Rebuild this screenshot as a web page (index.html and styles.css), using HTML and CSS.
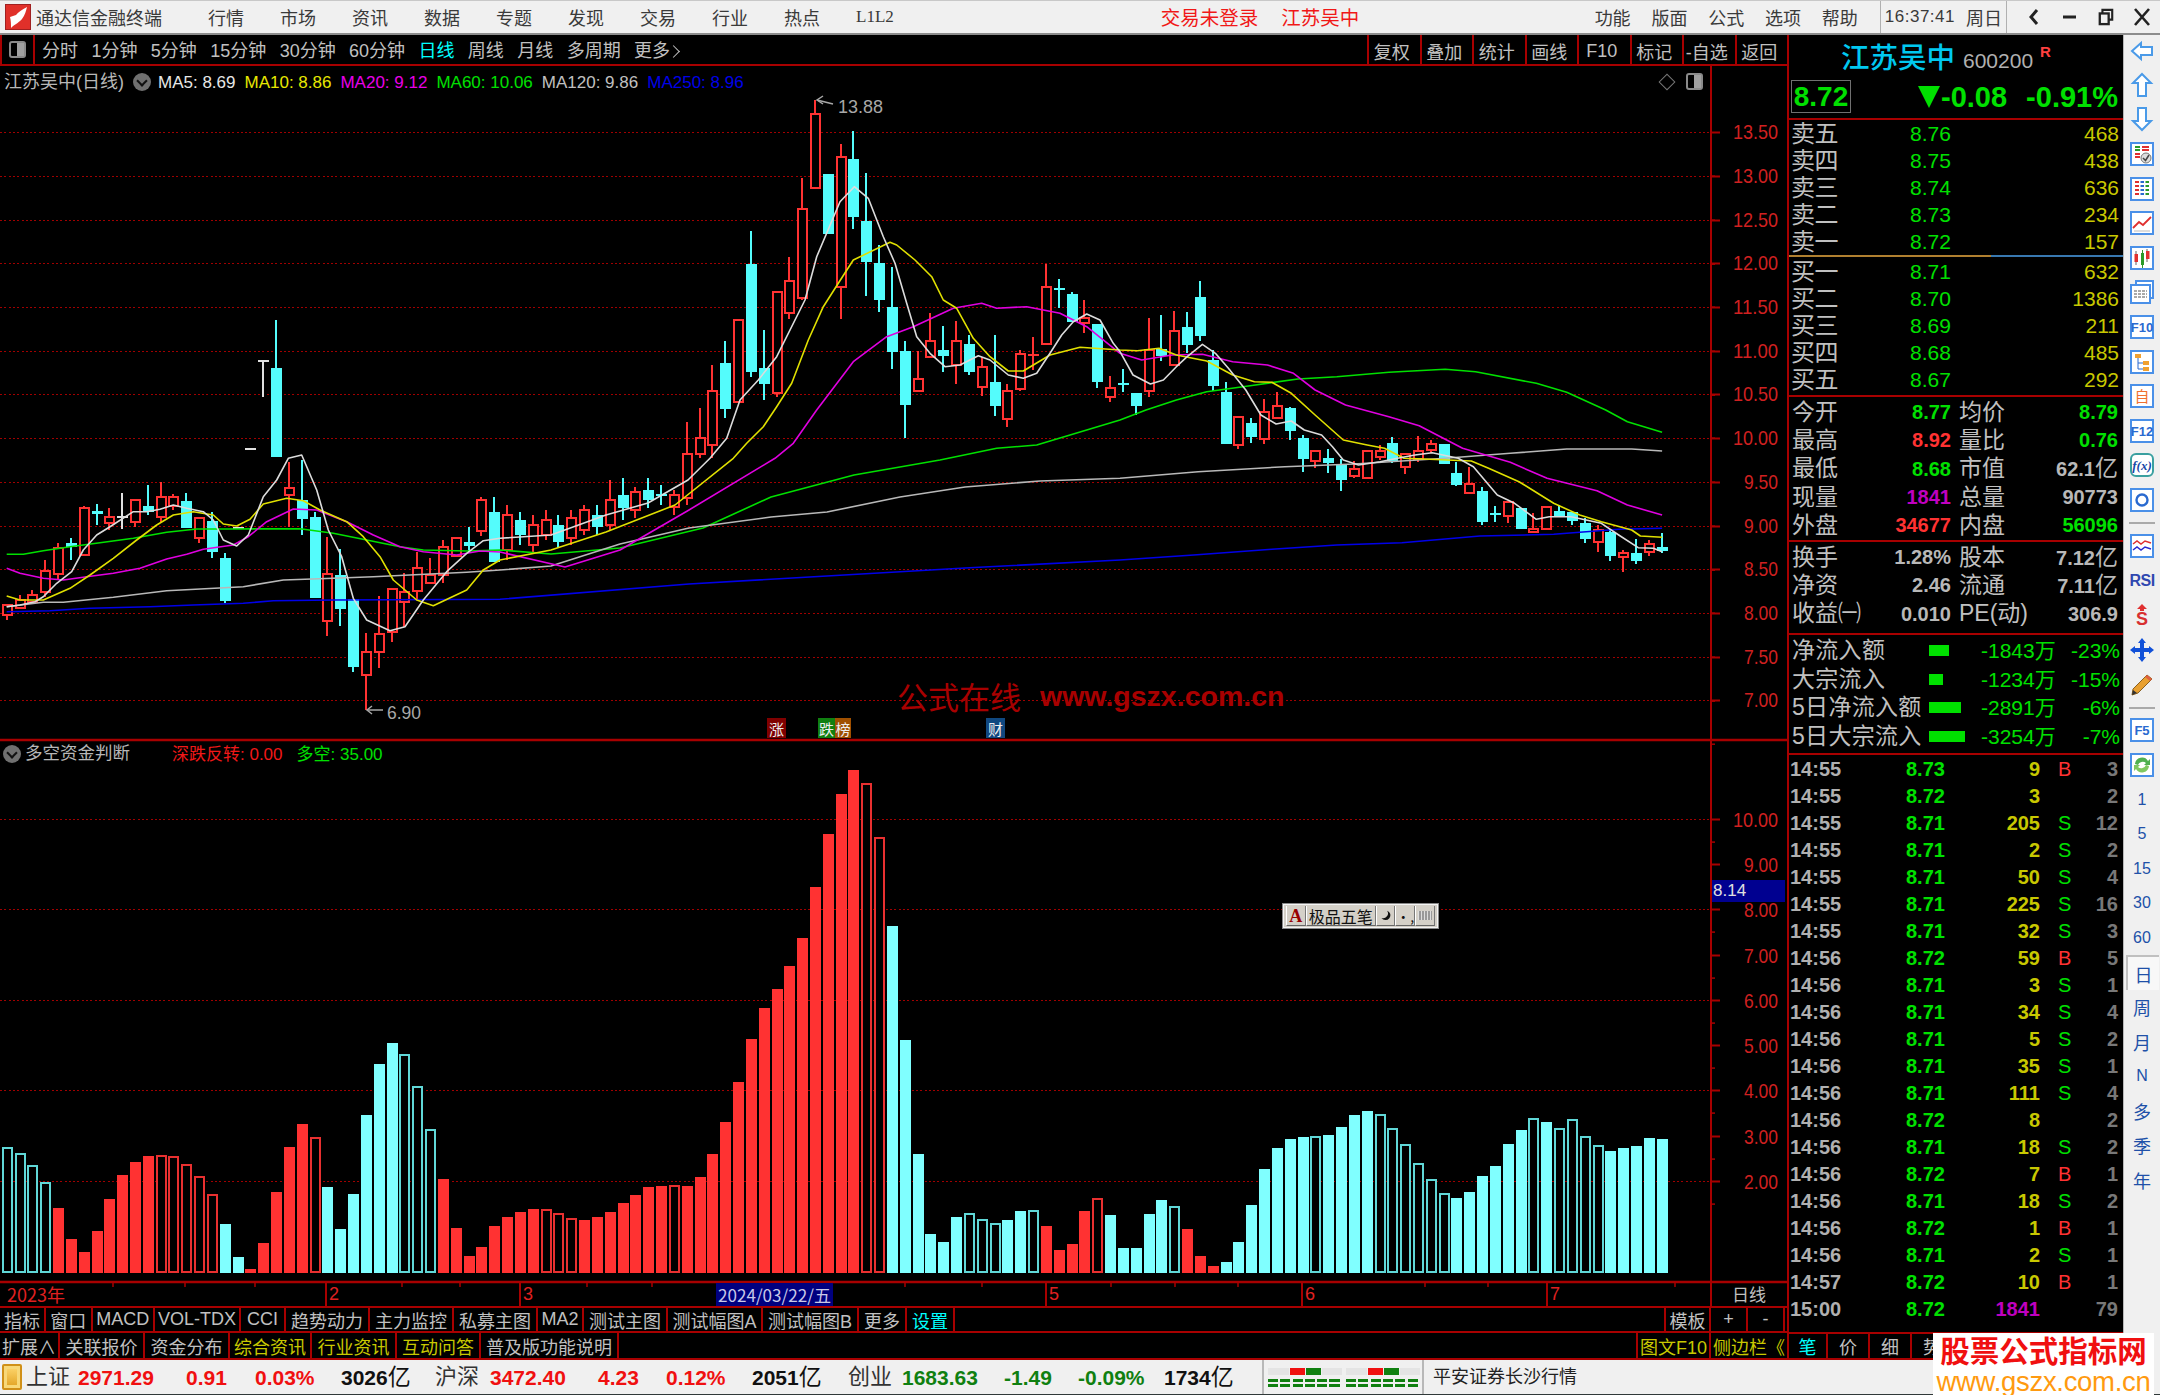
FILE: index.html
```html
<!DOCTYPE html>
<html lang="zh">
<head>
<meta charset="utf-8">
<title>通达信金融终端</title>
<link rel="stylesheet" href="styles.css">
</head>
<body>
<div class="app">
<header class="titlebar">
  <svg class="logo" viewBox="0 0 26 26"><rect width="26" height="26" fill="#e0302a"/><rect x=".5" y=".5" width="25" height="25" fill="none" stroke="#a02020"/><path d="M22 3C17 6 13 8 11 11L5 13C6 17 6 20 6 24C10 20 15 18 17 15C20 11 21 7 22 3Z" fill="#fff"/></svg>
  <span class="appname">通达信金融终端</span>
  <nav class="menu">
    <span>行情</span><span>市场</span><span>资讯</span><span>数据</span><span>专题</span><span>发现</span><span>交易</span><span>行业</span><span>热点</span><span class="l1l2">L1L2</span>
  </nav>
  <span class="notice notice-a">交易未登录</span>
  <span class="notice notice-b">江苏吴中</span>
  <nav class="menu menu-right">
    <span>功能</span><span>版面</span><span>公式</span><span>选项</span><span>帮助</span>
  </nav>
  <div class="clock"><span class="time">16:37:41</span><span>周日</span></div>
  <div class="winctl">
    <svg viewBox="0 0 16 20"><path d="M11 3L5 10L11 17" fill="none" stroke="#222" stroke-width="3"/></svg>
    <svg viewBox="0 0 16 20"><rect x="1" y="8.5" width="13" height="3" fill="#222"/></svg>
    <svg viewBox="0 0 18 20"><path d="M5 6V2H16V13H12" fill="none" stroke="#222" stroke-width="2.4"/><rect x="2" y="6" width="10" height="12" fill="none" stroke="#222" stroke-width="2.6"/></svg>
    <svg viewBox="0 0 16 20"><path d="M1 2L15 18M15 2L1 18" stroke="#222" stroke-width="2.6"/></svg>
  </div>
</header>

<div class="workspace">
  <main class="left">
    <div class="toolbar">
      <div class="tb-icon"><span class="panel-ico"><i></i></span></div>
      <div class="periods">
        <span>分时</span><span>1分钟</span><span>5分钟</span><span>15分钟</span><span>30分钟</span><span>60分钟</span><span class="c">日线</span><span>周线</span><span>月线</span><span>多周期</span><span>更多<i class="more-chev"></i></span>
      </div>
      <div class="tb-right">
        <span>复权</span><span>叠加</span><span>统计</span><span>画线</span><span>F10</span><span>标记</span><span>-自选</span><span>返回</span>
      </div>
    </div>
    <div class="chart">
      <svg id="chart" class="chart-svg" viewBox="0 66 1787 1240"></svg>
      <div class="legend legend-top">
        <span class="legend-name">江苏吴中(日线)</span><span class="chev"></span>
        <span class="lg-w">MA5: 8.69</span><span class="lg-y">MA10: 8.86</span><span class="lg-m">MA20: 9.12</span><span class="lg-g">MA60: 10.06</span><span class="lg-g2">MA120: 9.86</span><span class="lg-b">MA250: 8.96</span>
      </div>
      <div class="pane-ico"><span class="diamond"></span><span class="panel-ico small"><i></i></span></div>
      <div class="legend legend-low">
        <span class="chev chev-low"></span><span class="legend-name">多空资金判断</span>
        <span class="lg-r">深跌反转: 0.00</span><span class="lg-g">多空: 35.00</span>
      </div>
      <div class="gszx"><span class="gszx-cn">公式在线</span><span class="gszx-en">www.gszx.com.cn</span></div>
      <span class="tag tag-zhang">涨</span>
      <span class="tag tag-die">跌</span><span class="tag tag-bang">榜</span>
      <span class="tag tag-cai">财</span>
      <div class="ime">
        <span class="ime-a">A</span><span class="ime-name">极品五笔</span>
        <span class="ime-btn"><svg viewBox="0 0 16 16"><path d="M10 2A6 6 0 1 1 3 11A6 6 0 0 0 10 2Z" fill="#111"/></svg></span>
        <span class="ime-btn ime-punct">·,</span>
        <span class="ime-btn ime-kb"></span>
      </div>
      <span class="price-tag">8.14</span>
    </div>
    <div class="tabs tabs-a">
      <span>指标</span><span>窗口</span><span>MACD</span><span>VOL-TDX</span><span>CCI</span><span>趋势动力</span><span>主力监控</span><span>私募主图</span><span>MA2</span><span>测试主图</span><span>测试幅图A</span><span>测试幅图B</span><span>更多</span><span class="c">设置</span><span class="blank"></span><span>模板</span><span>+</span><span>-</span><span class="blank none"></span>
    </div>
    <div class="tabs tabs-b">
      <span>扩展∧</span><span>关联报价</span><span>资金分布</span><span class="y">综合资讯</span><span class="y">行业资讯</span><span class="y">互动问答</span><span>普及版功能说明</span><span class="blank"></span><span class="y">图文F10</span><span class="y none">侧边栏《</span>
    </div>
  </main>

  <aside class="panel">
    <div class="head">
      <div class="name-row"><span class="stock">江苏吴中</span><span class="code">600200</span><span class="rflag">R</span></div>
      <div class="quote-row"><span class="last">8.72</span><span class="chg"><i class="tri"></i>-0.08</span><span class="chg">-0.91%</span></div>
    </div>
    <div class="book">
      <div class="ob"><span>卖五</span><b>8.76</b><em>468</em></div>
      <div class="ob"><span>卖四</span><b>8.75</b><em>438</em></div>
      <div class="ob"><span>卖三</span><b>8.74</b><em>636</em></div>
      <div class="ob"><span>卖二</span><b>8.73</b><em>234</em></div>
      <div class="ob"><span>卖一</span><b>8.72</b><em>157</em></div>
    </div>
    <div class="ratio"><i class="ratio-a"></i><i class="ratio-b"></i></div>
    <div class="book book-buy">
      <div class="ob"><span>买一</span><b>8.71</b><em>632</em></div>
      <div class="ob"><span>买二</span><b>8.70</b><em>1386</em></div>
      <div class="ob"><span>买三</span><b>8.69</b><em>211</em></div>
      <div class="ob"><span>买四</span><b>8.68</b><em>485</em></div>
      <div class="ob"><span>买五</span><b>8.67</b><em>292</em></div>
    </div>
    <div class="stats stats-a">
      <div class="st"><span>今开</span><b class="g">8.77</b><span>均价</span><b class="g">8.79</b></div>
      <div class="st"><span>最高</span><b class="r">8.92</b><span>量比</span><b class="g">0.76</b></div>
      <div class="st"><span>最低</span><b class="g">8.68</b><span>市值</span><b>62.1<u>亿</u></b></div>
      <div class="st"><span>现量</span><b class="m">1841</b><span>总量</span><b>90773</b></div>
      <div class="st"><span>外盘</span><b class="r">34677</b><span>内盘</span><b class="g">56096</b></div>
    </div>
    <div class="stats stats-b">
      <div class="st"><span>换手</span><b>1.28%</b><span>股本</span><b>7.12<u>亿</u></b></div>
      <div class="st"><span>净资</span><b>2.46</b><span>流通</span><b>7.11<u>亿</u></b></div>
      <div class="st"><span>收益㈠</span><b>0.010</b><span>PE(动)</span><b>306.9</b></div>
    </div>
    <div class="flows">
      <div class="fl"><span>净流入额</span><i class="bar bar1"></i><b>-1843<u>万</u></b><b class="pct">-23%</b></div>
      <div class="fl"><span>大宗流入</span><i class="bar bar2"></i><b>-1234<u>万</u></b><b class="pct">-15%</b></div>
      <div class="fl"><span>5日净流入额</span><i class="bar bar3"></i><b>-2891<u>万</u></b><b class="pct">-6%</b></div>
      <div class="fl"><span>5日大宗流入</span><i class="bar bar4"></i><b>-3254<u>万</u></b><b class="pct">-7%</b></div>
    </div>
    <div class="ticks">
      <div class="tk"><span>14:55</span><b>8.73</b><em>9</em><s class="r">B</s><i>3</i></div>
      <div class="tk"><span>14:55</span><b>8.72</b><em>3</em><s></s><i>2</i></div>
      <div class="tk"><span>14:55</span><b>8.71</b><em>205</em><s>S</s><i>12</i></div>
      <div class="tk"><span>14:55</span><b>8.71</b><em>2</em><s>S</s><i>2</i></div>
      <div class="tk"><span>14:55</span><b>8.71</b><em>50</em><s>S</s><i>4</i></div>
      <div class="tk"><span>14:55</span><b>8.71</b><em>225</em><s>S</s><i>16</i></div>
      <div class="tk"><span>14:55</span><b>8.71</b><em>32</em><s>S</s><i>3</i></div>
      <div class="tk"><span>14:56</span><b>8.72</b><em>59</em><s class="r">B</s><i>5</i></div>
      <div class="tk"><span>14:56</span><b>8.71</b><em>3</em><s>S</s><i>1</i></div>
      <div class="tk"><span>14:56</span><b>8.71</b><em>34</em><s>S</s><i>4</i></div>
      <div class="tk"><span>14:56</span><b>8.71</b><em>5</em><s>S</s><i>2</i></div>
      <div class="tk"><span>14:56</span><b>8.71</b><em>35</em><s>S</s><i>1</i></div>
      <div class="tk"><span>14:56</span><b>8.71</b><em>111</em><s>S</s><i>4</i></div>
      <div class="tk"><span>14:56</span><b>8.72</b><em>8</em><s></s><i>2</i></div>
      <div class="tk"><span>14:56</span><b>8.71</b><em>18</em><s>S</s><i>2</i></div>
      <div class="tk"><span>14:56</span><b>8.72</b><em>7</em><s class="r">B</s><i>1</i></div>
      <div class="tk"><span>14:56</span><b>8.71</b><em>18</em><s>S</s><i>2</i></div>
      <div class="tk"><span>14:56</span><b>8.72</b><em>1</em><s class="r">B</s><i>1</i></div>
      <div class="tk"><span>14:56</span><b>8.71</b><em>2</em><s>S</s><i>1</i></div>
      <div class="tk"><span>14:57</span><b>8.72</b><em>10</em><s class="r">B</s><i>1</i></div>
      <div class="tk"><span>15:00</span><b>8.72</b><em class="m">1841</em><s></s><i>79</i></div>
    </div>
    <div class="ptabs"><span class="c">笔</span><span>价</span><span>细</span><span class="ptab-last">势</span></div>
  </aside>

  <aside class="sidebar">
    <div class="sb sb-first"><svg viewBox="0 0 26 26"><path d="M3 13L12 5V9H23V17H12V21Z" class="ol"/></svg></div>
    <div class="sb"><svg viewBox="0 0 26 26"><path d="M13 2L22 11H17V24H9V11H4Z" class="ol"/></svg></div>
    <div class="sb"><svg viewBox="0 0 26 26"><path d="M13 24L22 15H17V2H9V15H4Z" class="ol"/></svg></div>
    <div class="sb"><svg viewBox="0 0 26 26"><rect x="2" y="2" width="22" height="22" class="box"/><path d="M6 6H11M6 9H11" stroke="#2a9a2a" stroke-width="2"/><path d="M13 6H20M13 9H20" stroke="#e03030" stroke-width="2"/><path d="M6 13H11M6 16H11" stroke="#e03030" stroke-width="2"/><circle cx="17" cy="17" r="5" fill="#ddd" stroke="#777"/><path d="M14 17L16.500 19.500L20 14" fill="none" stroke="#444" stroke-width="1.500"/></svg></div>
    <div class="sb"><svg viewBox="0 0 26 26"><rect x="2" y="2" width="22" height="22" class="box"/><path d="M6 6H10M6 10H10M6 14H10M6 18H10" stroke="#e03030" stroke-width="2"/><path d="M11.500 6H15M11.500 10H15M11.500 14H15M11.500 18H15" stroke="#2a6ad0" stroke-width="2"/><path d="M16.500 6H20M16.500 10H20M16.500 14H20M16.500 18H20" stroke="#2a9a2a" stroke-width="2"/></svg></div>
    <div class="sb"><svg viewBox="0 0 26 26"><rect x="2" y="2" width="22" height="22" class="box"/><path d="M4 18L10 12L14 15L22 7" fill="none" stroke="#e03030" stroke-width="1.800"/><path d="M5 21H21" stroke="#bbb"/></svg></div>
    <div class="sb"><svg viewBox="0 0 26 26"><rect x="2" y="2" width="22" height="22" class="box"/><path d="M7 6V20M18 4V17" stroke="#666"/><rect x="5.500" y="9" width="3.500" height="8" fill="#e03030"/><rect x="12" y="8" width="3" height="12" fill="#2a9a2a"/><path d="M13.500 5V23" stroke="#2a9a2a"/><rect x="17" y="6" width="3.500" height="8" fill="#e03030"/></svg></div>
    <div class="sb"><svg viewBox="0 0 26 26"><rect x="7" y="2" width="17" height="17" class="box"/><rect x="2" y="6" width="19" height="18" class="box"/><path d="M5 12H18M5 15H18M5 18H18" stroke="#555" stroke-dasharray="3 1"/></svg></div>
    <div class="sb"><svg viewBox="0 0 26 26"><rect x="2" y="2" width="22" height="22" class="box"/><text x="13" y="18" class="svg-f">F10</text></svg></div>
    <div class="sb"><svg viewBox="0 0 26 26"><rect x="2" y="2" width="22" height="22" class="box"/><path d="M9 8V20H15M9 14H15" fill="none" stroke="#2a6ad0"/><rect x="6" y="5" width="6" height="4" fill="#f0a030"/><rect x="14" y="12" width="6" height="4" fill="#f0a030"/><rect x="14" y="18" width="6" height="4" fill="#f0a030"/></svg></div>
    <div class="sb"><svg viewBox="0 0 26 26"><rect x="2" y="2" width="22" height="22" class="box"/><text x="13" y="19" class="svg-zi">自</text></svg></div>
    <div class="sb"><svg viewBox="0 0 26 26"><rect x="2" y="2" width="22" height="22" class="box"/><text x="13" y="18" class="svg-f">F12</text></svg></div>
    <div class="sb"><svg viewBox="0 0 26 26"><rect x="2" y="2" width="22" height="22" rx="5" class="box box-teal"/><text x="13" y="18" class="svg-fx">f(x)</text></svg></div>
    <div class="sb"><svg viewBox="0 0 26 26"><rect x="2" y="2" width="22" height="22" class="box"/><circle cx="13" cy="13" r="5.500" fill="none" stroke="#2a6ad0" stroke-width="2.400"/></svg></div>
    <div class="sb-sep"></div>
    <div class="sb"><svg viewBox="0 0 26 26"><rect x="2" y="2" width="22" height="22" class="box"/><path d="M4 11L8 8L12 11L16 8L22 10" fill="none" stroke="#e03030" stroke-width="1.500"/><path d="M4 17L8 14L12 17L16 14L22 16" fill="none" stroke="#2a2ad0" stroke-width="1.500"/></svg></div>
    <div class="sb"><span class="sb-rsi">RSI</span></div>
    <div class="sb"><svg viewBox="0 0 26 26"><path d="M8 7L13 2L18 7H15V9H11V7Z" fill="#e03030"/><text x="13" y="23" class="svg-s">S</text></svg></div>
    <div class="sb"><svg viewBox="0 0 26 26"><path d="M13 1L17 6H15V11H20V9L25 13L20 17V15H15V20H17L13 25L9 20H11V15H6V17L1 13L6 9V11H11V6H9Z" fill="#1050d8"/></svg></div>
    <div class="sb"><svg viewBox="0 0 26 26"><path d="M4 18L18 4L23 8L9 22L3 24Z" fill="#e8a030" stroke="#8a6020"/><path d="M18 4L23 8L21 10L16 6Z" fill="#e06040"/><path d="M3 24L4 19L8 22Z" fill="#333"/></svg></div>
    <div class="sb-sep"></div>
    <div class="sb"><svg viewBox="0 0 26 26"><rect x="2" y="2" width="22" height="22" class="box"/><text x="13" y="18" class="svg-f">F5</text></svg></div>
    <div class="sb"><svg viewBox="0 0 26 26"><rect x="2" y="2" width="22" height="22" class="box"/><path d="M6 12A7 7 0 0 1 19 9L21 7V13H15L17 11A5 5 0 0 0 9 13Z" fill="#50b050"/><path d="M20 14A7 7 0 0 1 7 17L5 19V13H11L9 15A5 5 0 0 0 17 13Z" fill="#80c860"/></svg></div>
    <div class="sb sb-num">1</div>
    <div class="sb sb-num">5</div>
    <div class="sb sb-num">15</div>
    <div class="sb sb-num">30</div>
    <div class="sb sb-num">60</div>
    <div class="sb sb-ch sb-on">日</div>
    <div class="sb sb-ch">周</div>
    <div class="sb sb-ch">月</div>
    <div class="sb sb-num">N</div>
    <div class="sb sb-ch">多</div>
    <div class="sb sb-ch">季</div>
    <div class="sb sb-ch">年</div>
  </aside>
</div>

<footer class="status">
  <span class="st-ico"></span>
  <span class="st-lab">上证</span><b class="sr">2971.29</b><b class="sr">0.91</b><b class="sr">0.03%</b><b>3026<u>亿</u></b>
  <span class="st-lab">沪深</span><b class="sr">3472.40</b><b class="sr">4.23</b><b class="sr">0.12%</b><b>2051<u>亿</u></b>
  <span class="st-lab">创业</span><b class="sg">1683.63</b><b class="sg">-1.49</b><b class="sg">-0.09%</b><b>1734<u>亿</u></b>
  <div class="meters">
    <div class="meter"><i></i><i class="mr"></i><i class="mg"></i><i></i><p></p></div>
    <div class="meter"><i></i><i class="mr"></i><i class="mg"></i><i></i><p></p></div>
  </div>
  <span class="broker">平安证券长沙行情</span>
</footer>
<div class="brand"><span class="brand-cn">股票公式指标网</span><span class="brand-en">www.gszx.com.cn</span></div>
</div>
<script src="chart.js"></script>
</body>
</html>
```

FILE: styles.css
```css
*{box-sizing:border-box}
html,body{margin:0;padding:0;background:#000}
body{font-family:"Noto Sans CJK SC","Liberation Sans",sans-serif;color:#c0c0c0}
.app{position:relative;width:2160px;height:1395px;display:flex;flex-direction:column;overflow:hidden}
b,em,i,s,u{font-weight:inherit;font-style:normal;text-decoration:none}
.c{color:#00ffff}
.y{color:#c8c800}
.g{color:#00e000}
.r{color:#ff3232}
.m{color:#c000c0}

/* title bar */
.titlebar{height:35px;flex:none;display:flex;align-items:center;background:#f0f0f0;border-top:1px solid #c8c8c8;border-bottom:2px solid #8c8c8c;color:#3a3a3a;font-size:18px;padding-left:5px}
.logo{width:26px;height:26px;flex:none}
.appname{margin-left:5px;width:126px;white-space:nowrap;line-height:1}
.menu{display:flex;gap:36px;margin-left:46px;line-height:1}
.menu span{white-space:nowrap}
.l1l2{font-family:"Liberation Serif",serif;font-size:17px}
.notice{color:#f01818;white-space:nowrap;font-size:19.500px;line-height:1}
.notice-a{margin-left:267px}
.notice-b{margin-left:23px}
.menu-right{margin-left:auto;gap:20.800px}
.clock{display:flex;align-items:center;gap:11px;height:32px;margin-left:22px;padding:0 4px;border-left:1px solid #b0b0b0;border-right:1px solid #b0b0b0;font-size:18px}
.time{font-family:"Liberation Sans",sans-serif;font-size:17px;letter-spacing:.5px}
.winctl{display:flex;gap:20px;align-items:center;padding:0 10px 0 19px}
.winctl svg{width:16px;height:20px}

/* workspace */
.workspace{flex:1;display:flex;min-height:0}
.left{width:1787px;flex:none;display:flex;flex-direction:column}
.toolbar{height:31px;flex:none;display:flex;align-items:stretch;border-bottom:2px solid #a80000;font-size:18px}
.tb-icon{width:35px;flex:none;display:flex;align-items:center;justify-content:center;border-right:2px solid #a80000;border-left:2px solid #a80000}
.panel-ico{display:block;width:17px;height:17px;border:2px solid #8a8a8a;border-radius:3px;position:relative}
.panel-ico i{position:absolute;right:0;top:0;bottom:0;width:7px;background:#a0a0a0}
.periods{display:flex;gap:13.400px;padding:3px 0 0 7px;align-items:center;line-height:1;white-space:nowrap}
.periods span{font-family:"Liberation Sans","Noto Sans CJK SC",sans-serif;display:flex;align-items:center}
.more-chev{display:block;width:9px;height:9px;margin-left:-1px;border-top:1px solid #c0c0c0;border-right:1px solid #c0c0c0;transform:rotate(45deg)}
.tb-right{margin-left:auto;display:flex}
.tb-right span{width:52.500px;padding:3px 5px 0 0;display:flex;align-items:center;justify-content:center;border-left:2px solid #a80000;font-family:"Liberation Sans","Noto Sans CJK SC",sans-serif;white-space:nowrap}

/* chart */
.chart{position:relative;height:1240px;flex:none;overflow:hidden}
.chart-svg{display:block;width:1787px;height:1240px}
.legend{position:absolute;left:0;display:flex;align-items:center;white-space:nowrap;font-family:"Liberation Sans","Noto Sans CJK SC",sans-serif;font-size:17px;line-height:1}
.legend-top{top:7px;left:4px;height:18px}
.legend-name{font-size:18px;color:#b8b8b8;width:129px}
.chev{width:18px;height:18px;border-radius:50%;background:#707070;position:relative;flex:none}
.chev::after{content:"";position:absolute;left:5px;top:4px;width:6px;height:6px;border-right:2px solid #111;border-bottom:2px solid #111;transform:rotate(45deg)}
.legend-top .legend-name{width:129px}
.legend-top .chev{margin-right:7px}
.legend-top span:not(.chev):not(.legend-name){margin-right:9px}
.lg-w{color:#e8e8e8}
.lg-y{color:#e8e800}
.lg-m{color:#e800e8}
.lg-g{color:#00e000}
.lg-g2{color:#c0c0c0}
.lg-b{color:#0000e8}
.lg-r{color:#f01818}
.legend-low{top:679px;left:3px;height:18px}
.chev-low{margin-right:4px}
.legend-low .legend-name{width:147px;font-size:17.500px}
.legend-low .lg-r{margin-right:14px;font-size:17px}
.pane-ico{position:absolute;top:7px;left:1661px;display:flex;align-items:center;gap:13px}
.diamond{width:12px;height:12px;border:1px solid #777;transform:rotate(45deg)}
.panel-ico.small{width:17px;height:17px}

.gszx{position:absolute;left:897px;top:610px;display:flex;align-items:center;gap:19px;color:#a80000;line-height:40px;white-space:nowrap}
.gszx-cn{font-family:"Noto Sans CJK SC",sans-serif;font-size:31px}
.gszx-en{font-family:"Liberation Sans",sans-serif;font-weight:700;font-size:28.500px}
.tag{position:absolute;top:652px;height:20px;display:flex;align-items:center;justify-content:center;font-size:15px;line-height:1;color:#eee}
.tag-zhang{left:767px;width:19px;background:#800000}
.tag-die{left:818px;width:17px;background:#108010}
.tag-bang{left:835px;width:16px;background:#a05000}
.tag-cai{left:986px;width:19px;background:#104880}
.ime{position:absolute;left:1282px;top:837px;width:157px;height:26px;background:#d4d0c8;border:2px solid #f4f4f4;outline:1px solid #888;outline-offset:-1px;display:flex;align-items:stretch;padding:1px 2px;color:#111;font-size:16px;line-height:1}
.ime>span{border-left:1px solid #fff;border-right:1px solid #777;display:flex;align-items:center;justify-content:center;border-bottom:1px solid #666}
.ime-a{width:20px;color:#900;font-family:"Liberation Serif",serif;font-weight:700;font-size:18px}
.ime-name{width:71px}
.ime-btn{width:20px}
.ime-btn svg{width:13px;height:13px}
.ime-punct{font-size:14px}
.ime-kb{background:repeating-linear-gradient(90deg,#999 0 2px,#ddd 2px 3px);background-clip:content-box;padding:5px 2px}
.price-tag{position:absolute;left:1712px;top:814px;width:73px;height:22px;background:#000090;color:#e0e0e0;font-family:"Liberation Sans",sans-serif;font-size:17px;line-height:22px;padding-left:1px}

/* tabs */
.tabs{display:grid;flex:none;border-top:2px solid #a80000;font-family:"Liberation Sans","Noto Sans CJK SC",sans-serif;font-size:18px;white-space:nowrap}
.tabs span{display:flex;align-items:center;justify-content:center;border-right:2px solid #a80000;overflow:hidden}
.tabs .blank{border-right:2px solid #a80000}
.tabs .none{border-right:0}
.tabs-a{height:25px;grid-template-columns:46px 46.500px 62.500px 86px 45px 84px 84px 84px 46px 84px 95px 96px 48px 48px 1fr 45px 37px 37px 2px}
.tabs-b{height:29px;border-bottom:2px solid #a80000;grid-template-columns:60px 85px 85px 82px 85px 84px 138px 1fr 73px 76px}

/* panel */
.panel{width:336px;flex:none;border-left:2px solid #a80000;display:flex;flex-direction:column;font-family:"Liberation Sans","Noto Sans CJK SC",sans-serif}
.head{height:85px;flex:none;border-bottom:2px solid #a80000;padding-top:1px}
.name-row{height:44px;display:flex;align-items:center;padding:0 0 4px 52px;line-height:1}
.stock{font-size:28.500px;color:#00c8f0;font-family:"Noto Sans CJK SC",sans-serif;font-weight:500}
.code{font-size:21px;color:#b0b0b0;margin-left:8px;margin-top:8px}
.rflag{font-size:15px;color:#ff4040;font-weight:700;margin-left:7px;margin-top:-10px}
.quote-row{display:flex;align-items:center;justify-content:flex-end;gap:19px;height:34px;padding-right:5px;position:relative;color:#00e000;font-weight:700;font-size:29px;line-height:1}
.chg{display:flex;align-items:center}
.tri{width:0;height:0;border-left:11px solid #0000;border-right:11px solid #0000;border-top:22px solid #00e000;margin-right:1px}
.last{position:absolute;left:2px;top:0;width:60px;height:33px;border:1px solid #707070;display:flex;align-items:center;justify-content:center;font-size:28px}
.book{flex:none}
.ob{display:grid;grid-template-columns:119px 1fr auto;height:27px;align-items:center;padding:0 4px 0 2px;line-height:1}
.ob span{font-size:24px;letter-spacing:-.5px}
.ob b{font-size:21px;color:#00e000}
.ob em{font-size:21px;color:#c8c800}
.ratio{display:flex;height:2px;flex:none}
.ratio-a{width:202px;background:#b08030}
.ratio-b{flex:1;background:#3878b0}
.book-buy{margin-top:1px;padding-bottom:2px;border-bottom:2px solid #a80000;height:139px}
.stats{flex:none;border-bottom:2px solid #a80000;padding-top:1px}
.stats-a{height:145px}
.stats-b{height:93px}
.st{display:grid;grid-template-columns:48px 111px 54px 113px;height:28.300px;align-items:center;padding-left:3px;line-height:1;white-space:nowrap}
.st span{font-size:23px}
.st span:nth-child(3){padding-left:8px}
.st b{font-size:20px;font-weight:700;text-align:right;color:#b8b8b8}
.st b.g{color:#00e000}
.st b.r{color:#ff3232}
.st b.m{color:#c000c0}
.st u{font-size:23px;font-weight:400}
.flows{flex:none;height:120px;border-bottom:2px solid #a80000;padding-top:1px}
.fl{display:grid;grid-template-columns:137px 52px 79px 60px;height:28.800px;align-items:center;padding-left:3px;white-space:nowrap;line-height:1}
.fl span{font-size:23px;letter-spacing:.3px}
.fl b{font-size:21px;color:#00e000}
.fl .pct{text-align:right}
.fl u{font-size:21px}
.bar{height:11px;background:#00e000;display:block}
.bar1{width:20px}
.bar2{width:14px}
.bar3{width:32px}
.bar4{width:36px}
.ticks{flex:none}
.tk{display:grid;grid-template-columns:116px 60px 74px 30px 48px;height:27px;align-items:center;padding-left:1px;font-size:20px;font-weight:700;line-height:1}
.tk span{color:#b0b0b0}
.tk b{color:#00e000}
.tk em{color:#c8c800;text-align:right}
.tk em.m{color:#c000c0}
.tk s{padding-left:18px;color:#00e000;font-weight:400}
.tk s.r{color:#ff3232}
.tk i{color:#787878;text-align:right}
.ptabs{margin-top:auto;height:28px;flex:none;border-top:2px solid #a80000;border-bottom:2px solid #a80000;display:flex;font-size:18px}
.ptabs span{width:42px;display:flex;align-items:center;justify-content:center;border-right:2px solid #a80000}
.ptabs span:first-child{width:39px}

/* sidebar */
.sidebar{flex:1;background:#f0f0f0;border-left:1px solid #b8b8b8;display:flex;flex-direction:column;color:#2050a8;overflow:hidden}
.sb{height:34.600px;flex:none;display:flex;align-items:center;justify-content:center}
.sb-first{height:32.600px}
.sb svg{width:26px;height:26px}
.ol{fill:#fff;stroke:#4a9ae8;stroke-width:2}
.box{fill:#fff;stroke:#4a90e8;stroke-width:2}
.box-teal{stroke:#3aa0a0}
.sb-sep{height:11.400px;flex:none;display:flex;align-items:center;margin:0 5px;background:linear-gradient(#0000 5px,#aaa 5px 7px,#0000 7px)}
.svg-f{font-family:"Liberation Sans",sans-serif;font-size:13px;fill:#2a6ad0;text-anchor:middle;font-weight:700}
.svg-zi{font-family:"Noto Sans CJK SC",sans-serif;font-size:15px;fill:#f07030;text-anchor:middle}
.svg-fx{font-family:"Liberation Serif",serif;font-style:italic;font-size:13px;fill:#1848a8;text-anchor:middle;font-weight:700}
.svg-s{font-family:"Liberation Sans",sans-serif;font-weight:700;font-size:18px;fill:#d83030;text-anchor:middle}
.sb-rsi{font-family:"Liberation Sans",sans-serif;font-weight:700;font-size:16px;color:#3048b0;letter-spacing:-.5px}
.sb-num{font-family:"Liberation Sans",sans-serif;font-size:16px}
.sb-ch{font-size:18px;line-height:1}
.sb-on{border-top:2px solid #c0c0c0;border-left:2px solid #c0c0c0;background:#f8f8f8;margin:0 1px 0 2px}

/* status */
.status{height:35px;flex:none;background:#f0f0f0;border-bottom:1px solid #303838;display:grid;grid-template-columns:26px 52px 108px 69px 86px 94px 55px 108px 68px 86px 96px 54px 102px 74px 86px 98px 162px 1fr;align-items:center;color:#111;font-family:"Liberation Sans","Noto Sans CJK SC",sans-serif;font-size:21px;font-weight:700;line-height:1;white-space:nowrap}
.status u{font-weight:400;font-size:23px}
.st-ico{width:20px;height:26px;margin-left:2px;background:linear-gradient(#ffd870,#e0a020);border:2px solid #d09018;box-shadow:inset 0 0 0 3px #f8d878;border-radius:2px}
.st-lab{font-weight:400;font-size:22px;color:#333}
.sr{color:#f01010}
.sg{color:#108010}
.meters{display:flex;gap:4px;height:100%;padding-left:4px;align-items:center;border-left:2px solid #b8b8b8;border-right:2px solid #b8b8b8}
.meter{width:74px;display:grid;grid-template-columns:1.400fr 1fr 1fr 1.300fr;gap:1px}
.meter i{height:7px;background:#e4e4e4}
.meter .mr{background:#f01010}
.meter .mg{background:#108010}
.meter p{grid-column:1/-1;margin:3px 0 0;height:8px;background:linear-gradient(#0000 3px,#f0f0f0 3px 5px,#0000 5px),repeating-linear-gradient(90deg,#108010 0 10px,#0000 10px 12.300px)}
.broker{font-weight:400;font-size:18px;padding-left:9px;color:#222}
.brand{position:absolute;left:1933px;top:1333px;width:221px;height:62px;background:#fff;display:flex;flex-direction:column;align-items:center;justify-content:center;padding-top:2px;line-height:1}
.brand-cn{font-size:29.500px;font-weight:700;color:#f01010;white-space:nowrap}
.brand-en{font-family:"Liberation Sans",sans-serif;font-size:27.500px;color:#ff9a10;margin-top:3px;white-space:nowrap;letter-spacing:-.3px}
```

FILE: chart.js
```js
(function () {
  var AX = 1711, XS = 12.83, X0 = 6.7, RED = '#ff3232', CY = '#54fcfc', DK = '#a00000', AXC = '#a80000';
  var yP = function (p) { return 263.3 + (12 - p) * 87.4; };
  var yL = function (v) { return 1181 - (v - 2) * 45.3; };
  var s = '';
  function line(x1, y1, x2, y2, c, w, extra) {
    s += '<line x1="' + x1 + '" y1="' + y1 + '" x2="' + x2 + '" y2="' + y2 + '" stroke="' + c + '" stroke-width="' + (w || 1) + '"' + (extra || '') + '/>';
  }
  function label(t, x, y, c, size, len, anchor, fam) {
    s += '<text x="' + x + '" y="' + y + '" fill="' + c + '" font-size="' + size + '" font-family="' + (fam || 'Liberation Sans') + '"' +
      (len ? ' textLength="' + len + '" lengthAdjust="spacingAndGlyphs"' : '') + (anchor ? ' text-anchor="' + anchor + '"' : '') + ' dominant-baseline="central">' + t + '</text>';
  }
  var DOT = ' stroke-dasharray="2 2.3" shape-rendering="crispEdges"';

  /* grid + price axis */
  for (var p = 7; p <= 13.5; p += 0.5) {
    var y = Math.round(yP(p)) + 0.5;
    line(0, y, AX, y, DK, 1, DOT);
    line(AX, y, AX + 9, y, AXC, 2);
    line(AX, y + 43.7, AX + 4, y + 43.7, AXC, 1.5);
    label(p.toFixed(2), 1778, y - 1, '#d02020', 21, p >= 10 ? 45 : 34, 'end');
  }
  for (var v = 2; v <= 10; v++) {
    var yy = Math.round(yL(v)) + 0.5;
    if (v % 2 === 0) line(0, yy, AX, yy, DK, 1, DOT);
    line(AX, yy, AX + 9, yy, AXC, 2);
    line(AX, yy + 22.6, AX + 4, yy + 22.6, AXC, 1.5);
    label(v.toFixed(2), 1778, yy, '#d02020', 21, v >= 10 ? 45 : 34, 'end');
  }
  line(AX, 66, AX, 1306, AXC, 2);
  line(0, 740, 1787, 740, AXC, 2.4);
  line(0, 1282, 1787, 1282, AXC, 2.4);

  /* candles: type top bottom high low, read off at base + value/scale */
  var segs = [
    [400, 3, 'r 615 645 615 660;r 600 625 585 625;r 585 605 570 610;r 512 577 480 590;r 445 522 430 540;c 430 440 415 480;r 323 465 318 465;c 332 343 312 375;r 350 370 325 390;w 352 352 280 388;r 300 365 300 380;c 318 337 254 345;r 292 352 245 365;r 292 318 282 330;c 304 385 280 385;r 355 415 355 430;c 362 457 335 475;c 475 602 460 610;w 385 385 385 388;w 148 148 148 148;w -117 -117 -117 -9;c -96 172 -240 172;r 265 285 185 380;c 300 358 180 405;c 352 595 335 595;r 522 662 412 708;c 525 627 448 677;c 597 800 597 815;r 757 825 700 930;r 702 757 588 805;r 567 697 567 727;r 575 607 520 680;r 503 572 457 600;r 525 550 475 550;r 440 525 420 548;r 413 467 413 467;c 427 438 380 460;r 300 392 290 407;c 335 487 290 487'],
    [0, 1, 'r 515 550 505 560;c 520 535 512 545;r 525 545 515 552;r 520 535 510 540;c 525 542 515 548;r 518 538 510 545;r 510 530 505 535;c 515 527 505 535;r 500 525 480 530;c 495 508 478 520;r 492 510 487 518;c 490 500 478 508;c 495 495 485 505;r 495 507 490 515'],
    [90, 3, 'r 1092 1224 995 1245;r 1045 1093 955 1103;r 902 1065 825 1105;c 820 958 752 985;r 690 935 690 935;c 523 846 423 860;c 833 882 720 930;r 605 908 605 922;r 573 668 500 688;r 357 625 265 630;r 73 295 30 295;c 253 432 253 432;r 200 592 163 688;c 208 382 122 418;c 392 517 248 617;c 518 630 465 665;c 650 787 530 837;c 783 945 752 1045;r 867 903 783 903;r 753 800 670 800;c 780 797 707 845;r 753 825 693 882;c 762 847 735 855;r 830 890 800 918;c 875 948 735 977;r 903 988 883 1012;r 793 898 780 903;r 795 795 740 840;r 592 763 522 763;c 598 598 568 655;c 613 697 605 697;r 685 700 630 730;c 703 877 703 895;r 893 920 857 935'],
    [260, 3, 'c 372 372 328 395;c 400 438 400 465;r 270 393 175 410;c 267 287 165 303;r 212 315 152 318;c 202 255 157 278;c 112 228 62 242;c 300 377 270 392;c 395 552 365 552;r 472 555 472 567;c 490 530 475 548;r 455 538 418 552;r 437 475 397 475;c 445 512 440 540;c 535 598 525 637;r 572 602 572 625;c 593 610 567 638;c 615 660 597 692;r 627 648 603 655;r 572 655 572 657;r 573 590 555 600;c 550 602 530 610;r 583 622 580 642;r 573 597 527 605;r 553 570 540 580;c 553 613 553 613;c 640 675 605 678;r 672 698 622 698;c 693 787 680 795;c 762 762 738 785;r 725 767 725 790;c 743 807 743 807;r 807 817 760 817;r 740 807 740 808;c 752 768 735 770;c 757 783 757 795;c 790 838 775 848;r 810 845 795 875;c 815 888 808 903;r 878 892 870 937;c 878 903 838 912;r 852 875 840 888;c 860 872 818 880']
  ];
  var idx = 0;
  segs.forEach(function (seg) {
    seg[2].split(';').forEach(function (rec) {
      var f = rec.split(' '), t = f[0];
      var Y = function (n) { return seg[0] + parseFloat(n) / seg[1]; };
      var top = Y(f[1]), bot = Y(f[2]), hi = Y(f[3]), lo = Y(f[4]);
      var x = Math.round(X0 + XS * idx), col = t === 'r' ? RED : t === 'c' ? CY : '#e0e0e0';
      var W = ' shape-rendering="crispEdges"';
      if (hi < top) line(x, hi, x, top, col, 2, W);
      if (lo > bot) line(x, bot, x, lo, col, 2, W);
      if (bot - top < 2) {
        line(x - 5, top, x + 6, top, col, 2, W);
      } else if (t === 'c') {
        s += '<rect x="' + (x - 5) + '" y="' + top + '" width="11" height="' + (bot - top) + '" fill="' + col + '"' + W + '/>';
      } else {
        s += '<rect x="' + (x - 4) + '" y="' + top + '" width="9" height="' + (bot - top) + '" fill="#000" stroke="' + col + '" stroke-width="2"' + W + '/>';
      }
      idx++;
    });
  });

  /* moving averages, traced off the reference */
  function Z(x0, y0, sx, sy, a) {
    var o = [];
    for (var i = 0; i < a.length; i += 2) o.push((x0 + a[i] / sx).toFixed(1) + ',' + (y0 + a[i + 1] / sy).toFixed(1));
    return o;
  }
  var z7 = function (a) { return Z(0, 400, 3, 3, a); };
  var z8 = function (a) { return Z(620, 90, 3, 3, a); };
  var z9 = function (a) { return Z(1120, 260, 2.306, 3, a); };
  var rl = function (a) { return Z(0, 0, 1, 1, a); };
  var mas = [
    ['#00e000', z7([20,463,70,463,130,452,210,440,300,428,400,415,500,397,590,387,700,387,900,386,1000,400,1100,420,1200,440,1270,450,1400,453,1500,450]).concat(rl([551,554,620,548,703,528,771,497,854,475]), z8([960,1110,1130,1075,1250,1065,1400,1020,1500,990]), z9([60,450,130,420,200,395,300,377,410,357,500,350,620,337,750,328,820,335,960,370,1030,397,1120,450,1170,485,1250,517]))],
    ['#b8b8b8', z7([20,620,130,607,190,607,340,592,500,572,730,560,850,540,1000,535,1120,530,1400,517,1500,510]).concat(rl([551,566,620,544,689,528,771,517,827,512,900,497,965,487,1040,481]), z9([0,655,180,635,380,620,540,612,750,595,900,580,1030,567,1180,567,1250,573]))],
    ['#0000e8', z7([20,635,150,632,270,625,450,620,580,615,730,610,820,602,1000,600,1500,598]).concat(rl([689,584,827,576,965,568]), z9([0,900,170,885,350,868,500,855,650,848,830,828,1000,823,1150,808,1250,805]))],
    ['#e000e0', z7([20,505,60,520,130,535,190,540,260,530,340,520,420,505,500,477,560,463,610,448,700,435,745,410,800,365,880,327,950,330,1040,365,1120,405,1200,440,1270,455,1370,465,1440,453]).concat(rl([500,552,565,567,620,550,689,510]), z8([465,1105,520,1060,590,960,700,815,800,740,880,710,1000,655,1085,640,1130,655,1220,650,1320,670,1400,710,1500,790]), z9([50,300,120,285,190,283,260,305,340,315,400,340,450,390,520,435,620,470,690,497,790,565,900,607,985,655,1100,692,1170,735,1250,765]))],
    ['#e0e000', z7([20,588,60,600,130,600,210,565,270,525,340,475,410,420,470,375,520,345,580,335,640,345,670,372,710,378,750,358,790,312,860,295,910,302,960,330,1040,365,1090,410,1140,470,1180,540,1250,600,1300,617,1400,570,1450,510,1500,480]).concat(rl([551,550,606,532,675,505]), z8([340,1105,380,1060,430,1010,470,950,515,880,565,750,610,650,655,580,700,510,810,457,830,465,885,510,935,560,970,630,1010,655,1060,745,1110,800,1165,843,1210,843,1290,795,1380,772,1500,780]), z9([40,272,90,265,130,285,200,303,260,345,310,365,350,367,395,400,450,465,515,540,570,555,610,565,655,595,700,597,810,603,850,625,920,665,1000,730,1060,765,1110,785,1180,810,1200,828,1250,832]))],
    ['#dcdcdc', z7([20,620,60,615,105,605,130,590,170,550,215,515,250,450,290,405,330,380,400,335,440,335,480,328,520,315,560,325,610,335,640,360,670,420,710,438,745,405,790,290,830,240,865,175,905,165,950,270,985,390,1025,470,1060,595,1100,660,1170,692,1215,680,1270,600,1340,515,1400,460,1450,422,1500,415]).concat(rl([551,535,606,515,648,503,688,480]), z8([270,1105,320,1045,360,930,415,870,470,800,555,630,590,500,660,335,703,290,745,325,790,440,825,520,860,640,890,740,930,790,975,830,1020,825,1075,797,1110,810,1165,855,1210,865,1250,850,1290,790,1325,735,1360,695,1400,672,1440,690,1480,760,1500,785]), z9([30,345,70,372,100,360,130,320,155,290,190,253,220,280,250,325,290,390,325,465,360,492,395,483,425,510,465,525,490,560,515,600,550,615,600,605,640,595,680,585,720,578,780,595,815,620,870,705,910,730,960,778,990,770,1040,770,1110,790,1150,825,1195,863,1230,865,1250,875]))]
  ];
  mas.forEach(function (m) {
    s += '<polyline points="' + m[1].join(' ') + '" fill="none" stroke="' + m[0] + '" stroke-width="1.6" stroke-linejoin="round"/>';
  });

  /* high and low marks */
  line(817, 100, 833, 104, '#a8a8a8', 1.5);
  s += '<path d="M823 96L817 100L823 104" fill="none" stroke="#a8a8a8" stroke-width="1.500"/>';
  label('13.88', 838, 106, '#a8a8a8', 19, 45);
  line(367, 710, 383, 710, '#a8a8a8', 1.5);
  s += '<path d="M372 706L367 710L372 714" fill="none" stroke="#a8a8a8" stroke-width="1.500"/>';
  label('6.90', 387, 712, '#a8a8a8', 19, 34);

  /* indicator bars: c/r colour, h hollow */
  var bars = [
    [1000, 3, 'ch445 ch462 ch498 ch548 r625 r718 r755 r692 r598 r525 r485 r467 rh467 rh472 rh494 rh530 rh585 c673 c772 r808 r728 r575 r440 r372 rh413 c561 c687 c583 c345 c192 c128 ch165 ch260 ch391 r538 r683 r768 r741 r678 r651 r637 r628 rh629 rh642 rh656 r660 r651 r637 r610 r584 r561 r557 rh557 r557 r530'],
    [660, 2.53, 'r1250 r1170 r1067 r958 r881 r832 r775 r703 r574 r441 r338 r278 rh313 rh450 c672 c961 c1249 c1451 c1473 c1409 ch1402 ch1417 ch1428 c1416 c1393 ch1393 r1432 r1492 r1478 r1393 rh1364 c1405 c1488 c1488 c1401 c1367 ch1383 r1439 r1507 r1534 c1522 c1473 c1379 c1287 c1234 c1211 c1208 ch1208 c1203 c1181 c1151 c1140 ch1152 ch1187 ch1228 ch1274 ch1316 ch1350 c1360 c1345'],
    [0, 1, 'c1176 c1166 c1144 c1130 ch1119 c1122 ch1129 ch1120 ch1137 ch1146 c1151 c1148 c1146 c1138 c1139']
  ];
  var bi = 0, BASE = 1272;
  bars.forEach(function (seg) {
    seg[2].split(' ').forEach(function (rec) {
      var m = /^([cr])(h?)(\d+)$/.exec(rec);
      var top = seg[0] + parseInt(m[3], 10) / seg[1];
      var x = Math.round(X0 + XS * bi);
      var fillc = m[1] === 'r' ? RED : '#80ffff', strk = m[1] === 'r' ? '#e83030' : '#60d8d8';
      if (m[2]) {
        s += '<rect x="' + (x - 4) + '" y="' + top + '" width="9" height="' + (BASE - top) + '" fill="#000" stroke="' + strk + '" stroke-width="2" shape-rendering="crispEdges"/>';
      } else {
        s += '<rect x="' + (x - 5) + '" y="' + top + '" width="11" height="' + (BASE - top + 1) + '" fill="' + fillc + '" shape-rendering="crispEdges"/>';
      }
      bi++;
    });
  });

  /* time axis */
  [113, 185, 255, 402, 460, 587, 652, 905, 982, 1111, 1175, 1238, 1425, 1488, 1675].forEach(function (x) {
    line(x, 1282, x, 1287, AXC, 1.5);
  });
  [326, 520, 1046, 1302, 1547].forEach(function (x) { line(x, 1282, x, 1306, AXC, 2); });
  s += '<rect x="716" y="1283" width="117" height="23" fill="#000080"/>';
  label('2023年', 7, 1294, '#e02020', 18, 0, '', 'Noto Sans CJK SC');
  label('2', 329, 1294, '#e02020', 18);
  label('3', 523, 1294, '#e02020', 18);
  label('2024/03/22/五', 718, 1294, '#c8c8e8', 17, 113, '', 'Noto Sans CJK SC');
  label('5', 1049, 1294, '#e02020', 18);
  label('6', 1305, 1294, '#e02020', 18);
  label('7', 1550, 1294, '#e02020', 18);
  label('日线', 1749, 1293, '#c0c0c0', 17, 0, 'middle', 'Noto Sans CJK SC');

  document.getElementById('chart').innerHTML = s;
})();
```
